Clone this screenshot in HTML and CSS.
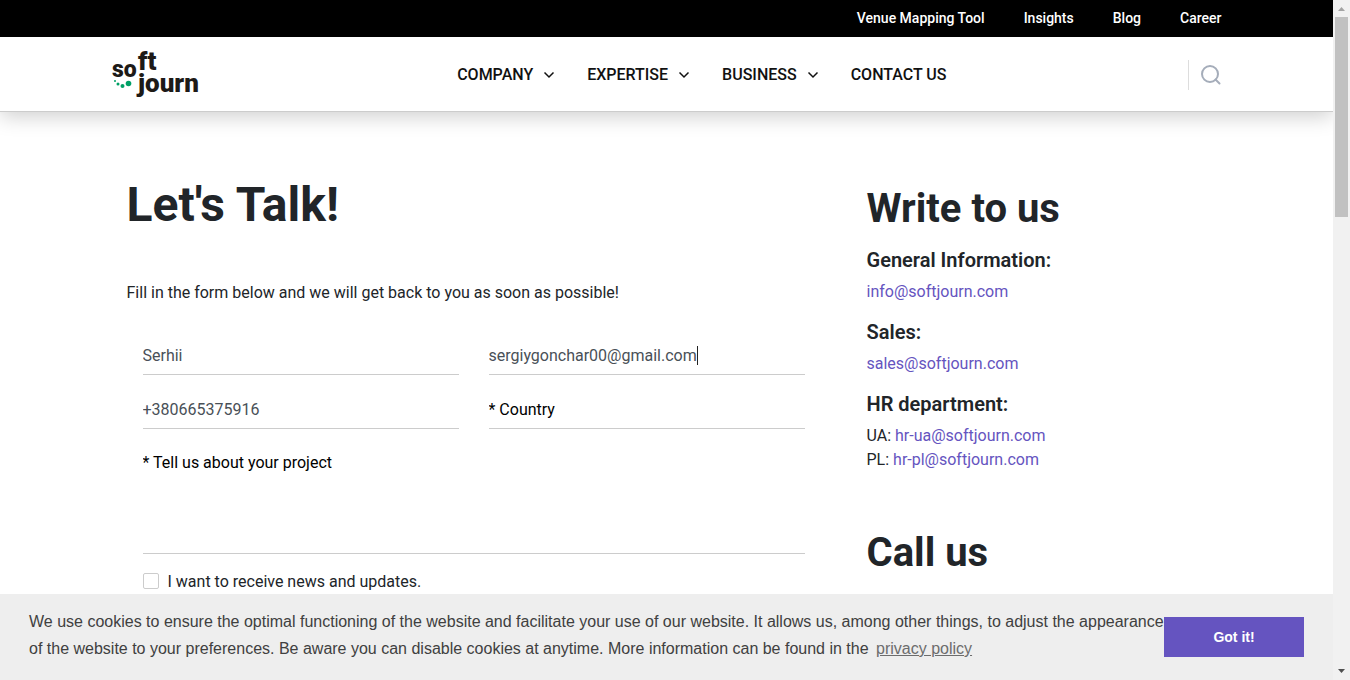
FILE: index.html
```html
<!DOCTYPE html>
<html lang="en">
<head>
<meta charset="utf-8">
<title>Contact us | Softjourn</title>
<link rel="stylesheet" href="styles.css">
</head>
<body>
<div class="page">
  <header class="header">
    <div class="topbar">
      <nav class="container topbar-nav" aria-label="Secondary">
        <a href="#">Venue Mapping Tool</a>
        <a href="#">Insights</a>
        <a href="#">Blog</a>
        <a href="#">Career</a>
      </nav>
    </div>
    <div class="container mainbar">
      <a class="logo" href="#" aria-label="Softjourn">
        <svg width="90" height="50" viewBox="0 0 90 50">
          <text x="0" y="27" font-size="23">so</text>
          <text x="26" y="20" font-size="26">ft</text>
          <text x="26" y="42" font-size="26">journ</text>
          <circle class="dot" cx="3" cy="31" r="1"/>
          <circle class="dot" cx="6" cy="34" r="1.500"/>
          <circle class="dot" cx="10.500" cy="36" r="2"/>
          <circle class="dot" cx="16.500" cy="33.500" r="2.800"/>
        </svg>
      </a>
      <nav class="main-nav" aria-label="Main">
        <a href="#">COMPANY <svg width="12" height="8" viewBox="0 0 12 8"><path d="M1.500 1.500 6 6l4.500-4.500"/></svg></a>
        <a href="#">EXPERTISE <svg width="12" height="8" viewBox="0 0 12 8"><path d="M1.500 1.500 6 6l4.500-4.500"/></svg></a>
        <a href="#">BUSINESS <svg width="12" height="8" viewBox="0 0 12 8"><path d="M1.500 1.500 6 6l4.500-4.500"/></svg></a>
        <a href="#">CONTACT US</a>
      </nav>
      <button class="search" type="button" aria-label="Search">
        <svg width="20" height="20" viewBox="0 0 20 20"><circle cx="9" cy="9" r="8"/><path d="m14.500 14.500 4 4"/></svg>
      </button>
    </div>
  </header>

  <main class="container content">
    <section class="talk">
      <h1>Let's Talk!</h1>
      <p class="intro">Fill in the form below and we will get back to you as soon as possible!</p>
      <form class="form">
        <div class="field"><input type="text" aria-label="Name" value="Serhii"></div>
        <div class="field"><input class="fit" type="email" aria-label="Email" value="sergiygonchar00@gmail.com"><span class="caret"></span></div>
        <div class="field"><input type="tel" aria-label="Phone" value="+380665375916"></div>
        <div class="field"><input type="text" aria-label="Country" placeholder="* Country"></div>
        <textarea rows="4" aria-label="Project" placeholder="* Tell us about your project"></textarea>
        <label class="news"><input type="checkbox">I want to receive news and updates.</label>
      </form>
    </section>
    <aside class="contacts">
      <h2>Write to us</h2>
      <h3>General Information:</h3>
      <p><a href="#">info@softjourn.com</a></p>
      <h3>Sales:</h3>
      <p><a href="#">sales@softjourn.com</a></p>
      <h3>HR department:</h3>
      <p>UA: <a href="#">hr-ua@softjourn.com</a><br>PL: <a href="#">hr-pl@softjourn.com</a></p>
      <h2 class="call">Call us</h2>
    </aside>
  </main>

  <div class="cookies" role="dialog" aria-label="Cookie notice">
    <p>We use cookies to ensure the optimal functioning of the website and facilitate your use of our website. It allows us, among other things, to adjust the appearance of the website to your preferences. Be aware you can disable cookies at anytime. More information can be found in the <a href="#">privacy policy</a></p>
    <button type="button">Got it!</button>
  </div>
</div>
<div class="scrollbar" aria-hidden="true">
  <svg width="7" height="4" viewBox="0 0 7 4"><path fill="#a3a3a3" d="M0 4 3.500 0 7 4z"/></svg>
  <div class="track"><div class="thumb"></div></div>
  <svg width="7" height="4" viewBox="0 0 7 4"><path fill="#505050" d="M0 0h7L3.500 4z"/></svg>
</div>
</body>
</html>
```

FILE: styles.css
```css
* { box-sizing: border-box; }
body {
  margin: 0;
  height: 100vh;
  display: flex;
  overflow: hidden;
  font: 16px/24px Roboto, sans-serif;
  color: #212529;
  background: #fff;
}
a { color: #6554c0; text-decoration: none; }
h1, h2, h3, p { margin: 0; }
input, textarea, button { font: inherit; }

.page { position: relative; flex: 1; min-width: 0; overflow: hidden; }
.container { width: 100%; max-width: 1140px; margin: 0 auto; padding: 0 15px; }

.header { border-bottom: 1px solid #ccc; box-shadow: 0 4px 20px rgba(0, 0, 0, .2); }
.topbar { background: #000; }
.topbar-nav {
  display: flex;
  justify-content: flex-end;
  gap: 39px;
  padding-bottom: 1px;
  font-size: 14px;
  font-weight: 500;
  line-height: 36px;
}
.topbar-nav a { color: #fff; }
.mainbar { display: flex; align-items: center; height: 74px; padding-top: 2px; }
.logo { flex: 1; display: flex; }
.logo text { font-family: Roboto, sans-serif; font-weight: 900; fill: #1d1a17; }
.logo svg { overflow: visible; }
.logo .dot { fill: #00a066; }
.main-nav { display: flex; gap: 32px; font-weight: 500; }
.main-nav a { display: flex; align-items: center; gap: 10px; color: #111; }
.main-nav path { fill: none; stroke: #111; stroke-width: 1.500; }
.search {
  margin-left: 241px;
  padding: 5px 1px 5px 12px;
  display: flex;
  border: 0;
  border-left: 1px solid #ddd;
  background: none;
}
.search svg { fill: none; stroke: #a5adba; stroke-width: 2; stroke-linecap: round; }

.content { display: grid; grid-template-columns: 2fr 1fr; padding-top: 64px; }
.talk { padding: 0 15px; }
.contacts { padding: 9px 15px 0; }
h1 { font-size: 48px; line-height: 58px; font-weight: 700; }
h2 { margin-bottom: 15px; font-size: 40px; line-height: 48px; font-weight: 700; }
h3 { margin-bottom: 8px; font-size: 20px; line-height: 24px; font-weight: 600; }
.contacts p { margin-bottom: 16px; }
.contacts .call { margin-top: 57px; }
.intro { margin-top: 47px; }

.form { display: grid; grid-template-columns: 1fr 1fr; gap: 16px 30px; margin-top: 32px; padding: 0 32px 0 16px; }
.field { display: flex; align-items: center; height: 38px; border-bottom: 1px solid #ccc; }
.field input { width: 100%; padding: 0; border: 0; background: none; color: #495057; outline: 0; }
.field .fit { width: auto; field-sizing: content; }
.caret { width: 1px; height: 19px; background: #222; }
textarea {
  grid-column: 1 / -1;
  display: block;
  height: 109px;
  padding: 6px 0;
  border: 0;
  border-bottom: 1px solid #ccc;
  resize: none;
  outline: 0;
}
.form ::placeholder { color: #000; opacity: 1; }
.news { grid-column: 1 / -1; display: flex; align-items: center; gap: 9px; }
.news input { appearance: none; width: 16px; height: 16px; margin: 0 0 2px; border: 1px solid #ccc; border-radius: 2px; background: #fff; }

.cookies {
  position: absolute;
  inset: auto 0 0;
  display: flex;
  align-items: center;
  padding: 14px 29px 18px;
  background: #eee;
  color: #404040;
  font: 16px/27px "Liberation Sans", Arial, sans-serif;
}
.cookies p { flex: 1; }
.cookies a { margin-left: 3px; color: #6c6c6c; text-decoration: underline; }
.cookies button { flex: none; width: 140px; height: 40px; margin-top: 4px; border: 0; background: #6554c0; color: #fff; font-size: 14px; font-weight: 700; }

.scrollbar {
  flex: none;
  width: 17px;
  display: flex;
  flex-direction: column;
  align-items: center;
  padding: 7px 0;
  background: #f1f1f1;
}
.track { flex: 1; padding-top: 6px; }
.thumb { width: 13px; height: 200px; background: #c1c1c1; }
```
